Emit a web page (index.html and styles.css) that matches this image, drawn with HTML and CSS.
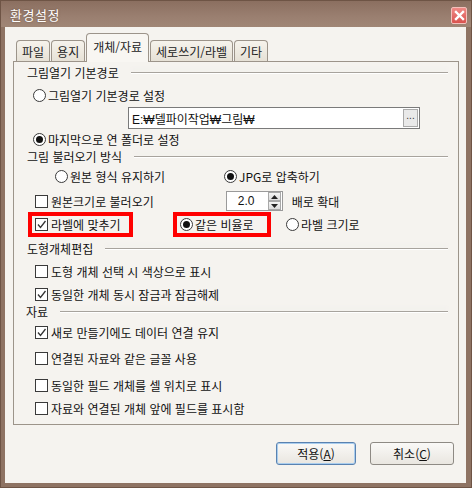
FILE: index.html
```html
<!DOCTYPE html>
<html lang="ko">
<head>
    <meta charset="UTF-8">
    <title>환경설정</title>
    <link rel="stylesheet" href="styles.css">
</head>
<body>
    <div class="window">
        <div class="titlebar">
            <span class="title">환경설정</span>
            <span class="close">
                <svg width="11" height="11" viewBox="0 0 11 11"><path d="M2 2 L9 9 M9 2 L2 9" stroke="#fff" stroke-width="2.4" stroke-linecap="square"/></svg>
            </span>
        </div>

        <div class="client">
            <div class="tabs">
                <div class="tab">파일</div>
                <div class="tab">용지</div>
                <div class="tab active">개체/자료</div>
                <div class="tab">세로쓰기/라벨</div>
                <div class="tab">기타</div>
            </div>

            <div class="panel">
                <div class="group-head h1"><span>그림열기 기본경로</span><i></i></div>
                <div class="row r1"><span class="rb"></span>그림열기 기본경로 설정</div>
                <div class="path">
                    <div class="path-box">
                        <span>E:₩델파이작업₩그림₩</span>
                        <span class="dots">...</span>
                    </div>
                </div>
                <div class="row r2"><span class="rb on"></span>마지막으로 연 폴더로 설정</div>

                <div class="group-head h2"><span>그림 불러오기 방식</span><i></i></div>
                <div class="row r3">
                    <span class="opt opt-keep"><span class="rb"></span>원본 형식 유지하기</span>
                    <span class="opt opt-jpg"><span class="rb on"></span>JPG로 압축하기</span>
                </div>
                <div class="row r4">
                    <span class="opt opt-orig"><span class="cb"></span>원본크기로 불러오기</span>
                    <span class="spin">
                        <span class="spin-val">2.0</span>
                        <span class="spin-btns">
                            <span class="sb"><svg width="7" height="4" viewBox="0 0 7 4"><path d="M0 4 L3.5 0 L7 4 Z" fill="#222"/></svg></span>
                            <span class="sb"><svg width="7" height="4" viewBox="0 0 7 4"><path d="M0 0 L7 0 L3.5 4 Z" fill="#222"/></svg></span>
                        </span>
                    </span>
                    <span class="zoom">배로 확대</span>
                </div>
                <div class="row r5">
                    <span class="mark mark-fit"><span class="cb on"><svg width="11" height="11" viewBox="0 0 11 11"><path d="M2 5.5 L4.5 8.5 L9.5 2" fill="none" stroke="#333" stroke-width="1.3"/></svg></span>라벨에 맞추기</span>
                    <span class="mark mark-ratio"><span class="rb on"></span>같은 비율로</span>
                    <span class="opt opt-label"><span class="rb"></span>라벨 크기로</span>
                </div>

                <div class="group-head h3"><span>도형개체편집</span><i></i></div>
                <div class="row c1"><span class="cb"></span>도형 개체 선택 시 색상으로 표시</div>
                <div class="row c2"><span class="cb on"><svg width="11" height="11" viewBox="0 0 11 11"><path d="M2 5.5 L4.5 8.5 L9.5 2" fill="none" stroke="#333" stroke-width="1.3"/></svg></span>동일한 개체 동시 잠금과 잠금해제</div>

                <div class="group-head h4"><span>자료</span><i></i></div>
                <div class="row c3"><span class="cb on"><svg width="11" height="11" viewBox="0 0 11 11"><path d="M2 5.5 L4.5 8.5 L9.5 2" fill="none" stroke="#333" stroke-width="1.3"/></svg></span>새로 만들기에도 데이터 연결 유지</div>
                <div class="row c4"><span class="cb"></span>연결된 자료와 같은 글꼴 사용</div>
                <div class="row c5"><span class="cb"></span>동일한 필드 개체를 셀 위치로 표시</div>
                <div class="row c6"><span class="cb"></span>자료와 연결된 개체 앞에 필드를 표시함</div>
            </div>

            <div class="buttons">
                <button class="btn default">적용(<u>A</u>)</button>
                <button class="btn">취소(<u>C</u>)</button>
            </div>
        </div>
    </div>
</body>
</html>
```

FILE: styles.css
```css
body {
    margin: 0;
    background: #f5f3ef;
    font-family: "Noto Sans CJK KR", "Noto Sans", sans-serif;
    font-size: 12px;
    color: #111;
}

.window {
    width: 472px;
    height: 488px;
    box-sizing: border-box;
    background: #8e7363;
    border: 1px solid #6e5445;
    display: flex;
    flex-direction: column;
}

.titlebar {
    height: 26px;
    flex: none;
    display: flex;
    align-items: center;
    justify-content: space-between;
    padding: 0 4px 0 9px;
    background: linear-gradient(#8b6f60, #9a7f70 60%, #a08676);
}

.title {
    color: #fff;
    font-size: 13px;
    letter-spacing: 0.5px;
    text-shadow: 0 0 2px #6b5040;
}

.close {
    width: 14px;
    height: 15px;
    margin-top: 3px;
    background: linear-gradient(#ef8a86, #d9534f);
    border: 1px solid #f3c0bb;
    border-radius: 2px;
    display: flex;
    align-items: center;
    justify-content: center;
}

.client {
    flex: 1;
    margin: 0 5px 4px 4px;
    background: #f5f3ef;
    display: flex;
    flex-direction: column;
    padding: 0 7px 0 8px;
}

/* tabs */
.tabs {
    display: flex;
    align-items: flex-end;
    height: 34px;
    padding-left: 3px;
    gap: 1px;
}

.tab {
    height: 20px;
    padding: 0 5px;
    border: 1px solid #9c948a;
    border-bottom: none;
    border-radius: 4px 4px 0 0;
    background: linear-gradient(#f6f3ec, #e6e1d6);
    display: flex;
    align-items: center;
    color: #222;
}

.tab.active {
    height: 24px;
    background: #f8f6f2;
    position: relative;
    top: 1px;
    padding: 0 6px 4px;
    z-index: 1;
}

.panel {
    height: 364px;
    border: 1px solid #9c948a;
    background: #f5f3ef;
    box-sizing: border-box;
    padding: 0 10px 0 13px;
}

/* group headers */
.group-head {
    height: 16px;
    display: flex;
    align-items: center;
    white-space: nowrap;
}

.group-head i {
    flex: 1;
    margin-left: 12px;
    height: 1px;
    background: #a7a39d;
    box-shadow: 0 1px 0 #fff, 0 -3px 4px #ecebe8;
}

.h1 { margin-top: 2px; }
.h2 { margin-top: 1px; }
.h3 { margin-top: 3px; }
.h4 { margin-top: 1px; margin-left: -1px; }

.row {
    height: 16px;
    display: flex;
    align-items: center;
    white-space: nowrap;
}

.r1 { margin-top: 7px; padding-left: 6px; }
.r2 { margin-top: 2px; padding-left: 6px; }
.r3 { margin-top: 4px; }
.r4 { margin-top: 7px; height: 20px; }
.r5 { margin-top: 1px; height: 25px; }
.c1 { margin-top: 7px; padding-left: 8px; }
.c2 { margin-top: 7px; padding-left: 8px; }
.c3 { margin-top: 5px; padding-left: 8px; }
.c4 { margin-top: 10px; padding-left: 8px; }
.c5 { margin-top: 11px; padding-left: 8px; }
.c6 { margin-top: 7px; padding-left: 8px; }

/* radio and checkbox */
.rb {
    width: 11px;
    height: 11px;
    border: 1px solid #3a3a3a;
    border-radius: 50%;
    background: #fff;
    margin-right: 2px;
    display: inline-flex;
    align-items: center;
    justify-content: center;
    flex: none;
}

.rb.on::after {
    content: "";
    width: 7px;
    height: 7px;
    border-radius: 50%;
    background: #111;
}

.cb {
    width: 11px;
    height: 11px;
    border: 1px solid #3a3a3a;
    background: #fff;
    margin-right: 3px;
    display: inline-flex;
    align-items: center;
    justify-content: center;
    flex: none;
}

.opt {
    display: inline-flex;
    align-items: center;
}

.opt-keep { margin-left: 28px; }
.opt-jpg { margin-left: 59px; }
.opt-orig { margin-left: 8px; }
.opt-label { margin-left: 15px; }

/* path input */
.path {
    margin-top: 4px;
    padding-left: 101px;
}

.path-box {
    width: 292px;
    height: 22px;
    box-sizing: border-box;
    border: 1px solid #7a7a7a;
    background: #fff;
    display: flex;
    align-items: center;
    justify-content: space-between;
    padding: 0 1px 0 3px;
    font-family: "Liberation Sans", "Noto Sans CJK KR", sans-serif;
}

.dots {
    width: 15px;
    height: 18px;
    box-sizing: border-box;
    border: 1px solid #aaa;
    background: #e9e9e9;
    font-size: 10px;
    line-height: 12px;
    text-align: center;
    color: #333;
}

/* spinner */
.spin {
    margin-left: 72px;
    width: 57px;
    height: 20px;
    box-sizing: border-box;
    border: 1px solid #9a9a9a;
    background: #fff;
    display: flex;
    align-items: center;
    justify-content: space-between;
    padding-left: 11px;
}

.spin-val {
    font-family: "Liberation Sans", sans-serif;
    font-size: 12px;
}

.spin-btns {
    display: flex;
    flex-direction: column;
    height: 18px;
    margin-right: 1px;
}

.sb {
    width: 13px;
    height: 9px;
    box-sizing: border-box;
    border: 1px solid #a8a8a8;
    background: linear-gradient(#f4f4f4, #dcdcdc);
    display: flex;
    align-items: center;
    justify-content: center;
}

.zoom {
    margin-left: 9px;
}

/* red highlight boxes */
.mark {
    height: 25px;
    box-sizing: border-box;
    border: 4px solid #ff0000;
    display: inline-flex;
    align-items: center;
}

.mark-fit {
    width: 105px;
    margin-left: 1px;
    padding-left: 3px;
}

.mark-ratio {
    width: 98px;
    margin-left: 40px;
    padding-left: 3px;
}

/* buttons */
.buttons {
    display: flex;
    justify-content: flex-end;
    gap: 14px;
    margin-top: 17px;
    padding-right: 5px;
}

.btn {
    width: 80px;
    height: 23px;
    border: 1px solid #8e8a84;
    border-radius: 3px;
    background: linear-gradient(#faf9f7, #e9e6e0);
    font-family: "Noto Sans CJK KR", sans-serif;
    font-size: 12px;
    color: #111;
    padding: 0;
}

.btn + .btn {
    width: 84px;
}

.btn.default {
    border-color: #5a82b0;
    box-shadow: inset 0 0 0 1px #a9cdee;
}
```
